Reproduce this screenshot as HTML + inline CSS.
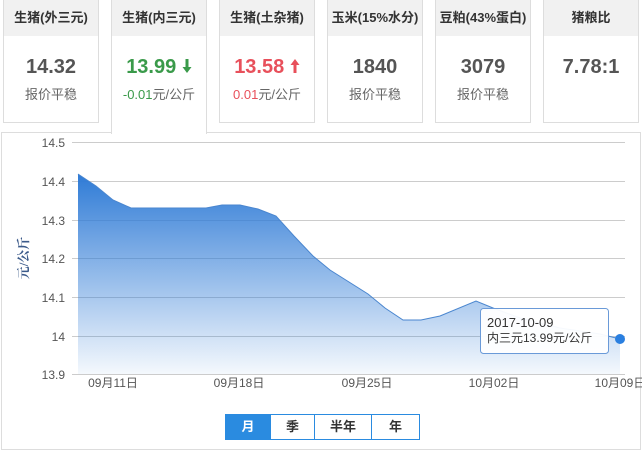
<!DOCTYPE html>
<html><head><meta charset="utf-8"><style>
body{margin:0;width:642px;height:451px;background:#fff;font-family:"Liberation Sans","Noto Sans CJK SC",sans-serif;position:relative;overflow:hidden}
.card{position:absolute;top:0;width:96px;height:123px;border:1px solid #ddd;border-top:none;background:#fff;text-align:center;box-sizing:border-box}
.card .h{height:36px;background:#f1f1f1;line-height:36px;font-size:13px;color:#333;font-weight:bold}
.card .v{font-size:20px;font-weight:bold;color:#555;margin-top:18px;line-height:26px}
.card .s{font-size:13px;color:#666;margin-top:4px}
.act{height:134px;border-bottom:none;z-index:2}
.panel{position:absolute;left:1px;top:132px;width:640px;height:318px;border:1px solid #ddd;box-sizing:border-box}
.btns{position:absolute;left:225px;top:414px;display:flex;border:1px solid #2a8be0;height:26px;box-sizing:border-box}
.btns div{line-height:24px;font-size:13px;text-align:center;color:#333;border-left:1px solid #2a8be0;font-weight:bold}
</style></head><body>
<div class="card" style="left:3px"><div class="h">生猪(外三元)</div><div class="v">14.32</div><div class="s">报价平稳</div></div>
<div class="card act" style="left:111px"><div class="h">生猪(内三元)</div><div class="v" style="color:#3a9a4a">13.99 <svg width="10" height="16" viewBox="0 0 10 16" style="vertical-align:-1px"><path d="M3.5,1 H6.5 V9 H9.5 L5,15 L0.5,9 H3.5Z" fill="#3a9a4a"/></svg></div><div class="s" style="color:#3a9a4a">-0.01<span style="color:#666">元/公斤</span></div></div>
<div class="card" style="left:219px"><div class="h">生猪(土杂猪)</div><div class="v" style="color:#e8505b">13.58 <svg width="10" height="16" viewBox="0 0 10 16" style="vertical-align:-1px"><path d="M3.5,15 H6.5 V7 H9.5 L5,1 L0.5,7 H3.5Z" fill="#e8505b"/></svg></div><div class="s" style="color:#e8505b">0.01<span style="color:#666">元/公斤</span></div></div>
<div class="card" style="left:327px"><div class="h">玉米(15%水分)</div><div class="v">1840</div><div class="s">报价平稳</div></div>
<div class="card" style="left:435px"><div class="h">豆粕(43%蛋白)</div><div class="v">3079</div><div class="s">报价平稳</div></div>
<div class="card" style="left:543px"><div class="h">猪粮比</div><div class="v">7.78:1</div></div>
<div class="panel"></div>
<svg style="position:absolute;left:0;top:0" width="642" height="451">
<defs><linearGradient id="g" x1="0" y1="0" x2="0" y2="1"><stop offset="0" stop-color="#2f7bd6"/><stop offset="1" stop-color="#2f7bd6" stop-opacity="0.05"/></linearGradient></defs>
<g stroke="#ccc" stroke-width="1">
<line x1="72" y1="142.5" x2="625" y2="142.5"/><line x1="72" y1="181.5" x2="625" y2="181.5"/><line x1="72" y1="220.5" x2="625" y2="220.5"/><line x1="72" y1="258.5" x2="625" y2="258.5"/><line x1="72" y1="297.5" x2="625" y2="297.5"/><line x1="72" y1="336.5" x2="625" y2="336.5"/><line x1="72" y1="374.5" x2="625" y2="374.5"/>
</g>
<path d="M78,174 L96,186 L113,200 L131,208 L206,208 L222,205 L240,205 L258,209 L276,216 L294,236 L313,256 L330,270 L368,294 L385,308 L403,320 L421,320 L440,316 L476,301 L493,308 L520,318 L560,328 L600,334 L620,339 L620,374 L78,374Z" fill="url(#g)"/>
<path d="M78,174 L96,186 L113,200 L131,208 L206,208 L222,205 L240,205 L258,209 L276,216 L294,236 L313,256 L330,270 L368,294 L385,308 L403,320 L421,320 L440,316 L476,301 L493,308 L520,318 L560,328 L600,334 L620,339" fill="none" stroke="#4a86cf" stroke-width="1"/>
<circle cx="620" cy="339" r="5" fill="#2a7fe0"/>
<g font-size="12" fill="#555" text-anchor="end" font-family="Liberation Sans,sans-serif">
<text x="65" y="147">14.5</text><text x="65" y="186">14.4</text><text x="65" y="225">14.3</text><text x="65" y="263">14.2</text><text x="65" y="302">14.1</text><text x="65" y="341">14</text><text x="65" y="379">13.9</text></g>
<text transform="translate(28,258) rotate(-90)" font-size="13" font-weight="bold" fill="#3b5a8a" text-anchor="middle" font-family="Liberation Serif,Noto Serif CJK SC,serif">元/公斤</text>
<g font-size="12" fill="#555" text-anchor="middle" font-family="Liberation Sans,Noto Sans CJK SC,sans-serif">
<text x="113" y="387">09月11日</text><text x="239" y="387">09月18日</text><text x="367" y="387">09月25日</text><text x="494" y="387">10月02日</text><text x="620" y="387">10月09日</text></g>
<rect x="480.5" y="308.5" width="128" height="45" rx="3" fill="#fff" fill-opacity="0.95" stroke="#6a9ad8"/>
<text x="487" y="327" font-size="13" fill="#333">2017-10-09</text>
<text x="487" y="342" font-size="12" fill="#333" font-family="Liberation Sans,Noto Sans CJK SC,sans-serif">内三元13.99元/公斤</text>
</svg>
<div class="btns"><div style="width:44px;background:#2a8be0;color:#fff;border:none">月</div><div style="width:43px">季</div><div style="width:56px">半年</div><div style="width:47px">年</div></div>
</body></html>
